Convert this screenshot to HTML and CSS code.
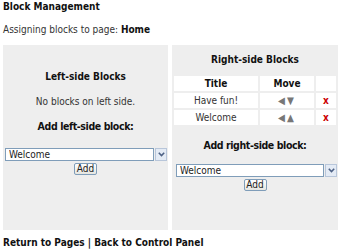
FILE: index.html
```html
<!DOCTYPE html>
<html>

<head>
    <title>Block Management</title>
    <link rel="stylesheet" href="styles.css">
</head>

<body>
    <h1>Block Management</h1>
    <p class="intro">Assigning blocks to page: <b>Home</b></p>

    <div class="columns">
        <div class="panel panel-left">
            <h2>Left-side Blocks</h2>
            <p class="empty">No blocks on left side.</p>
            <h3>Add left-side block:</h3>
            <div class="picker">
                <select><option>Welcome</option></select>
                <span class="arrow">
                    <svg width="7" height="5" viewBox="0 0 7 5"><path d="M0.8 0.8l2.7 2.7 2.7-2.7" fill="none" stroke="#4d6185" stroke-width="1.6"/></svg>
                </span>
            </div>
            <button class="add">Add</button>
        </div>

        <div class="panel panel-right">
            <h2>Right-side Blocks</h2>
            <table class="blocks">
                <tr>
                    <th class="col-title">Title</th>
                    <th class="col-move">Move</th>
                    <th class="col-del"></th>
                </tr>
                <tr>
                    <td>Have fun!</td>
                    <td class="move">&#9664;&#9660;</td>
                    <td class="del">x</td>
                </tr>
                <tr>
                    <td>Welcome</td>
                    <td class="move">&#9664;&#9650;</td>
                    <td class="del">x</td>
                </tr>
            </table>
            <h3>Add right-side block:</h3>
            <div class="picker">
                <select><option>Welcome</option></select>
                <span class="arrow">
                    <svg width="7" height="5" viewBox="0 0 7 5"><path d="M0.8 0.8l2.7 2.7 2.7-2.7" fill="none" stroke="#4d6185" stroke-width="1.6"/></svg>
                </span>
            </div>
            <button class="add">Add</button>
        </div>
    </div>

    <p class="footer"><a href="#">Return to Pages</a> | <a href="#">Back to Control Panel</a></p>
</body>

</html>
```

FILE: styles.css
```css
body {
    font-family: "DejaVu Sans Condensed", "DejaVu Sans", Verdana, sans-serif;
    font-size: 10px;
    color: #333;
    margin: 0;
    padding: 1px 2px 0 3px;
    background: #fff;
}

h1 {
    font-size: 10px;
    font-weight: bold;
    color: #111;
    margin: 0 0 11px;
    line-height: 12px;
}

.intro {
    margin: 0 0 9px;
    line-height: 12px;
}

.intro b {
    color: #111;
}

.columns {
    display: grid;
    grid-template-columns: 165px 166px;
    gap: 4px;
    height: 185px;
}

.panel {
    background: #eeeeee;
    text-align: center;
}

.panel-left {
    padding: 26px 0 0;
}

.panel-right {
    padding: 9px 0 0;
}

h2 {
    font-size: 10px;
    font-weight: bold;
    color: #111;
    margin: 0 0 13px;
    line-height: 12px;
}

.panel-right h2 {
    margin-bottom: 8px;
}

h3 {
    font-size: 10.5px;
    font-weight: bold;
    color: #111;
    letter-spacing: -0.4px;
    margin: 0 0 15px;
    line-height: 13px;
}

.panel-right h3 {
    margin-bottom: 12px;
}

.empty {
    margin: 0 0 12px;
    line-height: 12px;
}

.blocks {
    width: 100%;
    border-spacing: 2px;
    margin: 0 0 12px;
}

.blocks th,
.blocks td {
    background: #fff;
    height: 15px;
    padding: 0;
    font-size: 10px;
    line-height: 15px;
}

.blocks th {
    color: #111;
}

.col-title {
    width: 84px;
}

.col-del {
    width: 20px;
}

.move {
    color: #777;
    font-size: 8px;
    letter-spacing: 2px;
}

.del {
    color: #c00;
    font-weight: bold;
}

.picker {
    display: flex;
    height: 13px;
    margin: 0 1px 2px 2px;
}

.panel-right .picker {
    margin-left: 4px;
}

.picker select {
    appearance: none;
    flex: 1;
    height: 13px;
    border: 1px solid #7f9db9;
    background: #fff;
    font-family: "DejaVu Sans Condensed", "DejaVu Sans", Verdana, sans-serif;
    font-size: 10px;
    line-height: 11px;
    color: #222;
    padding: 0 3px;
    margin: 0;
}

.arrow {
    width: 10px;
    height: 11px;
    border: 1px solid #b8c6da;
    background: #e4ebf5;
    display: flex;
    align-items: center;
    justify-content: center;
    margin-left: 1px;
}

.add {
    font-family: "DejaVu Sans Condensed", "DejaVu Sans", Verdana, sans-serif;
    font-size: 10px;
    color: #222;
    height: 12px;
    width: 23px;
    padding: 0;
    line-height: 10px;
    border: 1px solid #7f9db9;
    border-radius: 2px;
    background: linear-gradient(#fff, #e6e6e0);
}

.footer {
    margin: 7px 0 0;
    font-weight: bold;
    line-height: 12px;
    color: #111;
}

.footer a {
    color: #111;
    text-decoration: none;
}
```
